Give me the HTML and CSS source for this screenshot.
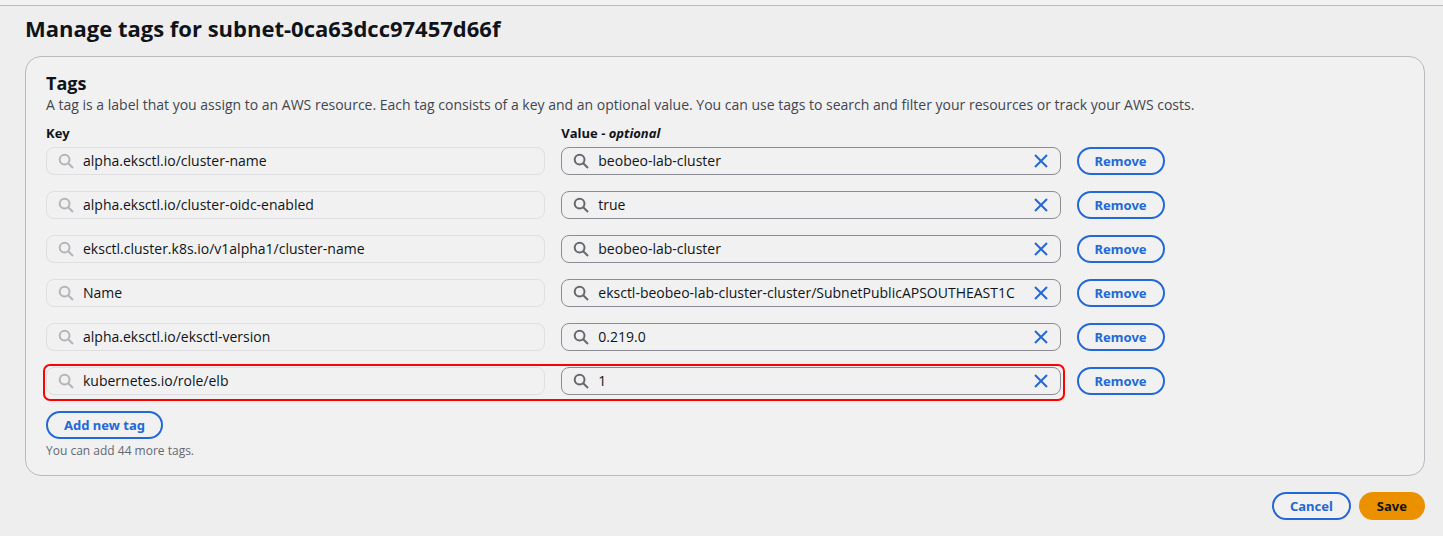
FILE: index.html
```html
<!DOCTYPE html>
<html lang="en">
<head>
  <meta charset="UTF-8" />
  <meta name="viewport" content="width=device-width, initial-scale=1.0"/>
  <title>Manage tags</title>
  <link rel="stylesheet" href="styles.css">
</head>
<body>
  <svg class="sprite" aria-hidden="true">
    <symbol id="search" viewBox="0 0 16 16">
      <circle cx="6.6" cy="6.6" r="4.9"/>
      <path d="M10.2 10.2L15 15"/>
    </symbol>
    <symbol id="close" viewBox="0 0 16 16">
      <path d="M2 2l12 12M14 2L2 14"/>
    </symbol>
  </svg>

  <div class="topbar"></div>
  <main class="page">
    <h1>Manage tags for subnet-0ca63dcc97457d66f</h1>

    <section class="card">
      <h2>Tags</h2>
      <p class="description">A tag is a label that you assign to an AWS resource. Each tag consists of a key and an optional value. You can use tags to search and filter your resources or track your AWS costs.</p>

      <div class="tag-row labels">
        <label for="key1">Key</label>
        <label for="value1">Value - <em>optional</em></label>
      </div>

      <div class="tag-row">
        <div class="field disabled">
          <svg class="icon"><use href="#search"/></svg>
          <input type="text" id="key1" value="alpha.eksctl.io/cluster-name" disabled>
        </div>
        <div class="field">
          <svg class="icon"><use href="#search"/></svg>
          <input type="text" id="value1" value="beobeo-lab-cluster">
          <button class="clear" aria-label="Clear"><svg class="icon"><use href="#close"/></svg></button>
        </div>
        <button class="btn">Remove</button>
      </div>

      <div class="tag-row">
        <div class="field disabled">
          <svg class="icon"><use href="#search"/></svg>
          <input type="text" aria-label="Key" value="alpha.eksctl.io/cluster-oidc-enabled" disabled>
        </div>
        <div class="field">
          <svg class="icon"><use href="#search"/></svg>
          <input type="text" aria-label="Value" value="true">
          <button class="clear" aria-label="Clear"><svg class="icon"><use href="#close"/></svg></button>
        </div>
        <button class="btn">Remove</button>
      </div>

      <div class="tag-row">
        <div class="field disabled">
          <svg class="icon"><use href="#search"/></svg>
          <input type="text" aria-label="Key" value="eksctl.cluster.k8s.io/v1alpha1/cluster-name" disabled>
        </div>
        <div class="field">
          <svg class="icon"><use href="#search"/></svg>
          <input type="text" aria-label="Value" value="beobeo-lab-cluster">
          <button class="clear" aria-label="Clear"><svg class="icon"><use href="#close"/></svg></button>
        </div>
        <button class="btn">Remove</button>
      </div>

      <div class="tag-row">
        <div class="field disabled">
          <svg class="icon"><use href="#search"/></svg>
          <input type="text" aria-label="Key" value="Name" disabled>
        </div>
        <div class="field">
          <svg class="icon"><use href="#search"/></svg>
          <input type="text" aria-label="Value" value="eksctl-beobeo-lab-cluster-cluster/SubnetPublicAPSOUTHEAST1C">
          <button class="clear" aria-label="Clear"><svg class="icon"><use href="#close"/></svg></button>
        </div>
        <button class="btn">Remove</button>
      </div>

      <div class="tag-row">
        <div class="field disabled">
          <svg class="icon"><use href="#search"/></svg>
          <input type="text" aria-label="Key" value="alpha.eksctl.io/eksctl-version" disabled>
        </div>
        <div class="field">
          <svg class="icon"><use href="#search"/></svg>
          <input type="text" aria-label="Value" value="0.219.0">
          <button class="clear" aria-label="Clear"><svg class="icon"><use href="#close"/></svg></button>
        </div>
        <button class="btn">Remove</button>
      </div>

      <div class="tag-row highlighted">
        <div class="field disabled">
          <svg class="icon"><use href="#search"/></svg>
          <input type="text" aria-label="Key" value="kubernetes.io/role/elb" disabled>
        </div>
        <div class="field">
          <svg class="icon"><use href="#search"/></svg>
          <input type="text" aria-label="Value" value="1">
          <button class="clear" aria-label="Clear"><svg class="icon"><use href="#close"/></svg></button>
        </div>
        <button class="btn">Remove</button>
      </div>

      <button class="btn">Add new tag</button>
      <p class="hint">You can add 44 more tags.</p>
    </section>

    <div class="actions">
      <button class="btn">Cancel</button>
      <button class="btn primary">Save</button>
    </div>
  </main>
</body>
</html>
```
FILE: styles.css
```css
* {
  box-sizing: border-box;
}
body {
  margin: 0;
  font-family: "Open Sans", "Noto Sans", sans-serif;
  font-size: 14px;
  line-height: 20px;
  color: #0f141a;
  background: #eeeeee;
}
h1, h2, p {
  margin: 0;
}
.sprite {
  display: none;
}
.topbar {
  height: 6px;
  background: #f1f1f1;
  border-bottom: 1px solid #b9b9c0;
}
.page {
  padding: 7px 18px 16px 25px;
}
h1 {
  font-size: 22px;
  line-height: 30px;
  font-weight: 700;
}
.card {
  margin-top: 13px;
  padding: 14px 20px 16px;
  background: #f1f1f1;
  border: 1px solid #b9b9c0;
  border-radius: 16px;
}
h2 {
  font-size: 18px;
  line-height: 24px;
  font-weight: 700;
}
.description {
  color: #424650;
}
.tag-row {
  display: grid;
  grid-template-columns: 61fr 61fr 40fr;
  column-gap: 16px;
  margin-bottom: 16px;
}
.labels {
  margin: 8px 0 4px;
  font-size: 13px;
  font-weight: 700;
}
.field {
  display: flex;
  align-items: center;
  min-width: 0;
  height: 28px;
  padding: 0 11px;
  border: 1px solid #8c8c94;
  border-radius: 8px;
  color: #656871;
}
.field.disabled {
  border-color: #dedee3;
  color: #b4b4bb;
}
.field input {
  flex: 1;
  min-width: 0;
  padding: 0 8px 0 9px;
  border: none;
  outline: none;
  background: none;
  font: inherit;
  color: #0f141a;
}
.icon {
  display: block;
  flex: none;
  width: 16px;
  height: 16px;
  fill: none;
  stroke: currentColor;
  stroke-width: 2;
}
.clear {
  padding: 0;
  border: none;
  background: none;
  color: #2368d8;
  cursor: pointer;
}
.btn {
  justify-self: start;
  height: 28px;
  padding: 0 16px;
  border: 2px solid #2368d8;
  border-radius: 14px;
  background: #f1f1f1;
  color: #2368d8;
  font-family: "Noto Sans", sans-serif;
  font-size: 13px;
  font-weight: 700;
  cursor: pointer;
}
.btn.primary {
  border-color: #eb9100;
  background: #eb9100;
  color: #0f141a;
}
/* red frame around the key and value of one tag */
.highlighted {
  position: relative;
}
.highlighted::after {
  content: "";
  position: absolute;
  grid-column: 1 / 3;
  inset: -3px -4px -6px -3px;
  border: 2px solid #ff0000;
  border-radius: 7px;
  pointer-events: none;
}
.hint {
  margin-top: 4px;
  font-size: 12px;
  line-height: 16px;
  color: #656871;
}
.actions {
  display: flex;
  justify-content: flex-end;
  gap: 8px;
  margin-top: 16px;
}
```
